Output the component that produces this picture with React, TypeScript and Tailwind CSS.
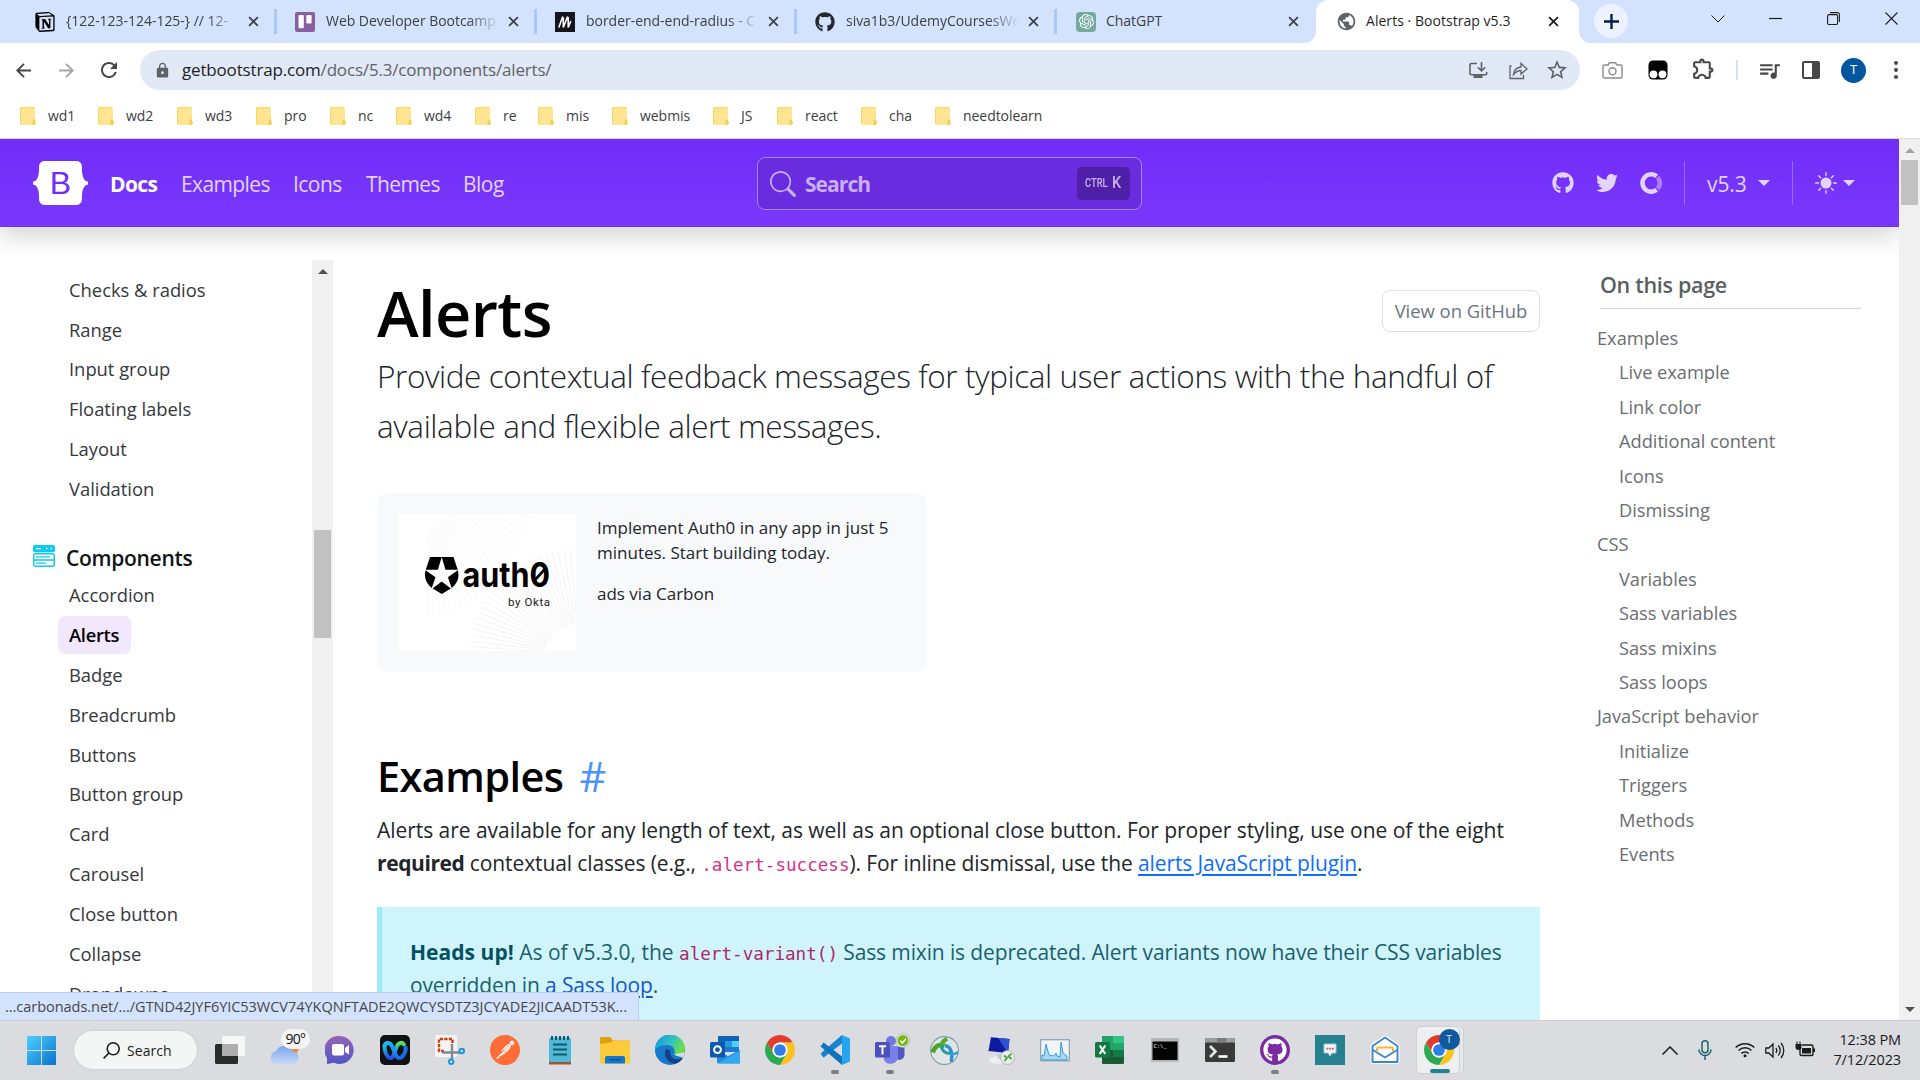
import React from "react";
import { FaGithub, FaTwitter } from "react-icons/fa";
import { SiNotion, SiOpenai, SiPostman } from "react-icons/si";
import { BsSearch, BsSunFill } from "react-icons/bs";
import { MdLock, MdOutlineStarBorder, MdOutlineExtension, MdOutlineQueueMusic, MdPublic, MdRefresh } from "react-icons/md";

const svg = "shrink-0 overflow-visible";

/* ---------- small shared glyphs ---------- */

function Cross({ className }: { className: string }) {
  return (
    <svg className={className} viewBox="0 0 12 12" fill="none" stroke="currentColor" strokeWidth="1.9">
      <path d="M1.2 1.2 10.8 10.8M10.8 1.2 1.2 10.8" />
    </svg>
  );
}

function TrelloIcon() {
  return (
    <svg className="size-5 shrink-0" viewBox="0 0 20 20">
      <rect width="20" height="20" rx="2" fill="#8660a0" />
      <rect x="3.5" y="3" width="5.3" height="13.2" rx="1" fill="#fff" />
      <rect x="11.3" y="3" width="5.3" height="8.6" rx="1" fill="#fff" />
    </svg>
  );
}

function MdnIcon() {
  return (
    <svg className="size-5 shrink-0" viewBox="0 0 20 20">
      <rect width="20" height="20" fill="#15141a" />
      <path d="M3.800 15.500 7.800 4.500M8.300 15.500V5.500M8.300 15.500 12.600 4.500M13.200 15.500V5M13.200 15.500 15.800 9" stroke="#fff" strokeWidth="1.600" />
    </svg>
  );
}

function ChromeIcon({ className }: { className: string }) {
  return (
    <svg className={className} viewBox="2 2 44 44">
      <path d="M4.95 13A22 22 0 0 1 43.05 13H24A11 11 0 0 0 14.47 29.5Z" fill="#e33b2e" />
      <path d="M43.05 13A22 22 0 0 1 24 46L33.53 29.5A11 11 0 0 0 24 13Z" fill="#fcc31e" />
      <path d="M24 46A22 22 0 0 1 4.95 13L14.47 29.5A11 11 0 0 0 33.53 29.5Z" fill="#2da94f" />
      <circle cx="24" cy="24" r="11" fill="#fff" />
      <circle cx="24" cy="24" r="8.6" fill="#2f7de9" />
    </svg>
  );
}

/* ---------- browser chrome ---------- */

const tabs = [
  { title: "{122-123-124-125-} // 12-", icon: <SiNotion className="size-5 shrink-0 text-black" />, fade: true },
  { title: "Web Developer Bootcamp", icon: <TrelloIcon />, fade: true },
  { title: "border-end-end-radius - C", icon: <MdnIcon />, fade: true },
  { title: "siva1b3/UdemyCoursesWe", icon: <FaGithub className="size-5 shrink-0 text-[#24292f]" />, fade: true },
  {
    title: "ChatGPT",
    icon: (
      <span className="flex size-5 shrink-0 items-center justify-center rounded-[4px] bg-[#74aa9c]">
        <SiOpenai className="size-[15px] text-white" />
      </span>
    ),
    fade: false,
  },
];

function TabStrip() {
  return (
    <div className="flex h-[43px] shrink-0 bg-[#d3e3fd] pl-[17px] text-[14px] tracking-[-0.030px] text-[#3c4043]">
      {tabs.map((t, i) => (
        <div
          key={t.title}
          className={i < 4 ? "flex w-[260px] shrink-0 items-center pl-[18px]" : "flex w-[259px] shrink-0 items-center pl-[19px]"}
        >
          {t.icon}
          <span
            className={
              t.fade
                ? "mt-[-2px] ml-[11px] w-[173px] overflow-hidden whitespace-nowrap [mask-image:linear-gradient(to_right,black_82%,transparent)]"
                : "mt-[-2px] ml-[10px] w-[173px] overflow-hidden whitespace-nowrap"
            }
          >
            {t.title}
          </span>
          <Cross className="ml-[9px] size-[11px] shrink-0" />
          {i < 4 && <span className="ml-auto h-[25px] w-[3px] bg-[#a8c7fa]" />}
        </div>
      ))}
      <div className="relative flex w-[263px] shrink-0 items-center rounded-t-[12px] bg-white pl-[20px] text-[#1f1f1f]">
        <svg className="absolute bottom-0 -left-3 size-3" viewBox="0 0 12 12">
          <path d="M12 0v12H0A12 12 0 0 0 12 0Z" fill="#fff" />
        </svg>
        <svg className="absolute -right-3 bottom-0 size-3" viewBox="0 0 12 12">
          <path d="M0 0v12h12A12 12 0 0 1 0 0Z" fill="#fff" />
        </svg>
        <MdPublic className="size-[21px] shrink-0 text-[#5f6368]" />
        <span className="mt-[-2px] ml-[9px] w-[182px] tracking-[0.04px] whitespace-nowrap">Alerts · Bootstrap v5.3</span>
        <Cross className="size-[11px]" />
      </div>
      <div className="mt-1 ml-[15px] flex size-[34px] items-center justify-center rounded-full bg-[#ecf2fe] text-[#041e49]">
        <svg className="size-[15px]" viewBox="0 0 15 15" stroke="currentColor" strokeWidth="2.4">
          <path d="M7.5 0v15M0 7.5h15" />
        </svg>
      </div>
      <div className="ml-auto flex h-[37px] items-center pr-[22px] text-[#1f1f1f]">
        <svg className="mr-[44px] h-[8px] w-[14px]" viewBox="0 0 14 8" fill="none" stroke="currentColor">
          <path d="M.5.5 7 7 13.5.5" />
        </svg>
        <svg className="mr-[45px] size-[13px]" viewBox="0 0 13 13" stroke="currentColor" strokeWidth="1.2">
          <path d="M0 6.5h13" />
        </svg>
        <svg className="mr-[45px] size-[13px]" viewBox="0 0 13 13" fill="none" stroke="currentColor" strokeWidth="1.1">
          <rect x=".6" y="2.6" width="10" height="10" rx="1.5" />
          <path d="M3 .6h7.4a2 2 0 0 1 2 2V10" />
        </svg>
        <svg className="size-[13px]" viewBox="0 0 13 13" fill="none" stroke="currentColor" strokeWidth="1.1">
          <path d="M.5.5 12.5 12.5M12.5.5.5 12.5" />
        </svg>
      </div>
    </div>
  );
}

function Arrow({ className }: { className: string }) {
  return (
    <svg className={className} viewBox="0 0 15 15" fill="none" stroke="currentColor" strokeWidth="1.9">
      <path d="M15 7.5H1.5M8 .8 1.3 7.5 8 14.2" />
    </svg>
  );
}

function Toolbar() {
  return (
    <div className="flex h-[54px] shrink-0 items-center bg-white pl-4 text-[#474747]">
      <Arrow className="size-[15px]" />
      <Arrow className="ml-[28px] size-[15px] rotate-180 text-[#a5a5a5]" />
      <MdRefresh className="ml-[23px] size-[24px]" />
      <div className="ml-[19px] flex h-10 w-[1440px] items-center rounded-full bg-[#e1e8f6] pl-[14px]">
        <MdLock className="size-[17px] text-[#5f6368]" />
        <span className="mt-[-1px] ml-[11px] text-[17px] tracking-[-0.170px] whitespace-nowrap text-[#5f6368]">
          <span className="text-[#1f1f1f]">getbootstrap.com</span>/docs/5.3/components/alerts/
        </span>
        <div className="ml-auto flex items-center pr-[11px] text-[#5f6368]">
          <svg className="size-[19px]" viewBox="0 0 19 19" fill="none" stroke="currentColor" strokeWidth="1.6">
            <path d="M8 2.5H2.2A1.2 1.2 0 0 0 1 3.700V12.600A1.200 1.200 0 0 0 2.200 13.800H16.500A1.200 1.200 0 0 0 17.700 12.600V11M12.500 1V9.500M8.800 6.200 12.500 9.800 16.200 6.200" />
            <path d="M4.500 14h9v3h-9Z" fill="currentColor" stroke="none" />
          </svg>
          <svg className="ml-[21px] size-[19px]" viewBox="0 0 19 19" fill="none" stroke="currentColor" strokeWidth="1.3">
            <path d="M2.500 5H1V17.500H14.500V14M4.500 13.500C5 9 8 6.500 12 6V2.200L18 8 12 13V9.500C8.500 9.700 6.500 11 4.500 13.500Z" />
          </svg>
          <MdOutlineStarBorder className="ml-[17px] size-[24px]" />
        </div>
      </div>
      <svg className="ml-[22px] size-[21px] text-[#8c8c8c]" viewBox="0 0 21 21" fill="none" stroke="currentColor" strokeWidth="1.4">
        <path d="M2.500 5H6L7.500 2.800H13.500L15 5H18.500A1.500 1.500 0 0 1 20 6.500V16.500A1.500 1.500 0 0 1 18.500 18H2.500A1.500 1.500 0 0 1 1 16.500V6.500A1.500 1.500 0 0 1 2.500 5Z" />
        <circle cx="10.500" cy="11.300" r="3.500" />
      </svg>
      <svg className="ml-[25px] size-[20px]" viewBox="0 0 20 20">
        <rect x="0.500" y="0.500" width="19" height="19" rx="4.500" fill="#000" />
        <circle cx="5.500" cy="14.300" r="3.900" fill="#fff" />
        <circle cx="14.500" cy="14.300" r="3.900" fill="#fff" />
      </svg>
      <MdOutlineExtension className="mt-[-3px] ml-[23px] size-[25px]" />
      <span className="ml-[20px] h-5 w-[2px] bg-[#d3e3fd]" />
      <MdOutlineQueueMusic className="ml-[19px] size-[25px]" />
      <svg className="ml-[20px] size-[18px]" viewBox="0 0 18 18">
        <rect x="1" y="1" width="16" height="16" rx="1" fill="none" stroke="currentColor" strokeWidth="2" />
        <path d="M10 1h7v16h-7Z" fill="currentColor" />
      </svg>
      <span className="ml-[21px] flex size-[25px] items-center justify-center rounded-full bg-[#0057a0] text-[13px] text-white">T</span>
      <svg className="ml-[28px] h-[18px] w-[4px]" viewBox="0 0 4 18" fill="currentColor">
        <circle cx="2" cy="2" r="2" />
        <circle cx="2" cy="9" r="2" />
        <circle cx="2" cy="16" r="2" />
      </svg>
    </div>
  );
}

const bookmarks = [
  { label: "wd1", w: "w-[78px]" },
  { label: "wd2", w: "w-[79px]" },
  { label: "wd3", w: "w-[79px]" },
  { label: "pro", w: "w-[74px]" },
  { label: "nc", w: "w-[66px]" },
  { label: "wd4", w: "w-[79px]" },
  { label: "re", w: "w-[63px]" },
  { label: "mis", w: "w-[74px]" },
  { label: "webmis", w: "w-[101px]" },
  { label: "JS", w: "w-[64px]" },
  { label: "react", w: "w-[84px]" },
  { label: "cha", w: "w-[74px]" },
  { label: "needtolearn", w: "w-[120px]" },
];

function Bookmarks() {
  return (
    <div className="flex h-[42px] shrink-0 items-start border-b border-[#dcdcdc] bg-white pt-[9px] pl-5 text-[14px] tracking-[-0.05px] text-[#3c4043]">
      {bookmarks.map((b) => (
        <div key={b.label} className={`flex h-[20px] items-center whitespace-nowrap ${b.w}`}>
          <svg className="h-[18px] w-4 shrink-0" viewBox="0 0 16 18">
            <path d="M1.500 0h12A1.500 1.500 0 0 1 15 1.500V18H1.500A1.500 1.500 0 0 1 0 16.500V1.500A1.500 1.500 0 0 1 1.500 0Z" fill="#ffe591" />
            <path d="M.5 17V1M1 .8H14" stroke="#fbd65c" strokeWidth="1" />
            <path d="M12.800 12.500h2.200l1 4-1.500 1.500h-2Z" fill="#f5cd4f" />
          </svg>
          <span className="mt-[-2px] ml-3">{b.label}</span>
        </div>
      ))}
    </div>
  );
}

/* ---------- site header ---------- */

function Caret() {
  return <span className="border-x-[6px] border-t-[6.5px] border-x-transparent border-t-current" />;
}

function SiteHeader() {
  return (
    <header className="relative z-10 flex h-[88px] shrink-0 items-center bg-linear-to-b from-[#712cf9] to-[#7a38fb] pl-[33px] text-[21px] tracking-[-0.45px] text-[#e2d4fe] shadow-[0_11px_22px_rgba(0,0,0,0.15),inset_0_-1px_0_rgba(0,0,0,0.1)]">
      <div className="relative h-[44px] w-[55px]">
        <svg className="size-full" viewBox="0 0 118 94" fill="#fff">
          <path d="M24.509 0c-6.733 0-11.715 5.893-11.492 12.284.214 6.140-.064 14.092-2.066 20.577C8.943 39.365 5.547 43.485 0 44.014v5.972c5.547.529 8.943 4.649 10.951 11.153 2.002 6.485 2.280 14.437 2.066 20.577C12.794 88.106 17.776 94 24.510 94H93.500c6.733 0 11.714-5.893 11.491-12.284-.214-6.140.064-14.092 2.066-20.577 2.009-6.504 5.396-10.624 10.943-11.153v-5.972c-5.547-.529-8.934-4.649-10.943-11.153-2.002-6.484-2.280-14.437-2.066-20.577C105.214 5.894 100.233 0 93.500 0H24.508z" />
        </svg>
        <span className="absolute inset-0 flex items-center justify-center font-['Liberation_Sans'] text-[32px] tracking-normal text-[#712cf9]">B</span>
      </div>
      <nav className="flex pt-[3px] font-medium whitespace-nowrap">
        <span className="ml-[22px] w-[71px] font-bold tracking-[-0.600px] text-white">Docs</span>
        <span className="w-[112px] tracking-[-0.600px]">Examples</span>
        <span className="w-[73px] tracking-[-0.550px]">Icons</span>
        <span className="w-[97px] tracking-[-0.600px]">Themes</span>
        <span className="w-[60px] tracking-[-0.500px]">Blog</span>
      </nav>
      <div className="mt-px ml-[234px] flex h-[53px] w-[385px] items-center rounded-[8px] border border-[#a883f4] bg-[#692cdf] px-[11px] text-[#c9aefb]">
        <BsSearch className="ml-px size-[26px]" />
        <span className="mt-[2px] ml-[9px] font-bold tracking-[-0.950px]">Search</span>
        <span className="ml-auto flex h-[33px] w-[53px] items-center justify-center gap-[6px] rounded-[5px] bg-[#4f20a7] pb-[2px] font-['Roboto'] text-[#c7b5ea]">
          <span className="w-[21px] origin-left scale-x-75 pt-px text-[12.500px] font-medium tracking-normal">CTRL</span>
          <span className="origin-left scale-x-90 text-[16px] font-medium tracking-normal">K</span>
        </span>
      </div>
      <div className="ml-auto flex items-center pr-[44px]">
        <FaGithub className="size-[22px]" />
        <FaTwitter className="ml-[22px] size-[22px]" />
        <svg className="ml-[22px] size-[22px]" viewBox="0 0 22 22" fill="none" strokeWidth="4.600">
          <path d="M16.700 4.300A8.700 8.700 0 1 0 16.700 17.700" stroke="#e2d4fe" />
          <path d="M17.600 5.200A8.700 8.700 0 0 1 17.600 16.800" stroke="#ac82fc" />
        </svg>
        <span className="ml-[22px] h-[44px] w-px bg-[#9c6afb]" />
        <span className="ml-[22px] w-[51px] pt-[3px] tracking-[-0.1px]">v5.3</span>
        <Caret />
        <span className="ml-[22px] h-[44px] w-px bg-[#9c6afb]" />
        <BsSunFill className="mr-[6px] ml-[22px] size-[22px]" />
        <Caret />
      </div>
    </header>
  );
}

/* ---------- page columns ---------- */

const formLinks = ["Checks & radios", "Range", "Input group", "Floating labels", "Layout", "Validation"];
const componentLinks = [
  "Accordion",
  "Alerts",
  "Badge",
  "Breadcrumb",
  "Buttons",
  "Button group",
  "Card",
  "Carousel",
  "Close button",
  "Collapse",
  "Dropdowns",
];

function SideLink({ label, active }: { label: string; active?: boolean }) {
  return (
    <li className="flex h-[39.900px] items-center pl-[58px]">
      <span
        className={
          active
            ? "flex h-[38px] w-[73px] items-center rounded-[7px] bg-[#f1e8fe] pl-[11px] font-semibold tracking-[-0.300px] text-black"
            : "px-[11px] pb-px"
        }
      >
        {label}
      </span>
    </li>
  );
}

function Sidebar() {
  return (
    <aside className="flex w-[333px] shrink-0 pt-[33px]">
      <div className="w-[312px] overflow-hidden pt-[10px] text-[18.400px] tracking-[-0.020px] whitespace-nowrap text-[#34383c]">
        <ul>
          {formLinks.map((l) => (
            <SideLink key={l} label={l} />
          ))}
        </ul>
        <div className="mt-[33px] flex h-[32px] items-center pl-[33px] text-[21px] font-semibold tracking-[-0.300px] text-[#111316]">
          <svg className="mt-[-4px] mr-[11px] size-[22px]" viewBox="0 0 22 22">
            <rect width="22" height="7.200" rx="2" fill="#0dcaf0" />
            <path d="M3 3.600h5M13 3.600h1.500M17.500 3.600h1.500" stroke="#fff" strokeWidth="1.400" />
            <rect x=".7" y="8.700" width="20.600" height="12.600" rx="1.800" fill="#fff" stroke="#0dcaf0" strokeWidth="1.400" />
            <path d="M1 15h20M3 11.900h14M3 18.100h10" stroke="#0dcaf0" strokeWidth="1.400" />
          </svg>
          Components
        </div>
        <ul className="mt-[1px]">
          {componentLinks.map((l) => (
            <SideLink key={l} label={l} active={l === "Alerts"} />
          ))}
        </ul>
      </div>
      <div className="flex w-[21px] flex-col items-center bg-[#f0f0f0]">
        <span className="mt-[9px] border-x-[5px] border-b-[5px] border-x-transparent border-b-[#505050]" />
        <span className="mt-[256px] h-[108px] w-[17px] bg-[#c1c1c1]" />
      </div>
    </aside>
  );
}

function AdImage() {
  const rays = Array.from({ length: 34 }, (_, i) => i);
  return (
    <svg className="h-[137px] w-[178px] shrink-0 bg-white" viewBox="0 0 178 137">
      <g stroke="#f0f0f0" strokeWidth=".8">
        {rays.map((i) => {
          const a = Math.PI * (0.95 + i * 0.018);
          const c = Math.cos(a);
          const s = Math.sin(a);
          return <path key={i} d={`M${182 + c * 35} ${140 + s * 30}L${182 + c * 110} ${140 + s * 105}`} />;
        })}
        {rays.map((i) => {
          const a = Math.PI * (0.5 - i * 0.016);
          const c = Math.cos(a);
          const s = Math.sin(a);
          return <path key={i} d={`M${30 + c * 35} ${-60 + s * 75}L${30 + c * 112} ${-60 + s * 160}`} opacity=".6" />;
        })}
      </g>
      <path d="M32 43H55.500L59.800 56C62 64 59 70.500 52 75L43.800 80 35.500 75C28.500 70.500 25.500 64 27.700 56Z" fill="#000" />
      <path d="M43.700 43 47.500 55.700H60.500L49.900 63.300 54.200 75.500 43.700 67.500 33.200 75.500 37.500 63.300 26.900 55.700H39.900Z" fill="#fff" />
      <text x="64.500" y="73" fontFamily="Inter" fontSize="34" fontWeight="700" textLength="67" lengthAdjust="spacingAndGlyphs">
        auth
      </text>
      <text x="131.500" y="73" fontFamily="Inter" fontSize="34" fontWeight="700" textLength="20.500" lengthAdjust="spacingAndGlyphs">
        0
      </text>
      <path d="M136.500 66.500 147 55" stroke="#000" strokeWidth="2.600" />
      <text x="110" y="91.500" fontFamily="Roboto" fontSize="11.500" textLength="42" fill="#222">
        by Okta
      </text>
    </svg>
  );
}

function Content() {
  return (
    <main className="ml-[44px] w-[1163px] shrink-0 whitespace-nowrap text-[#212529]">
      <div className="flex items-start justify-between">
        <h1 className="mt-[46px] text-[63px] leading-[80px] font-semibold tracking-[-0.600px] text-black">Alerts</h1>
        <span className="mt-[63px] flex h-[42px] w-[158px] items-center justify-center rounded-[8px] border border-[#dee2e6] text-[18.400px] text-[#6c757d]">
          View on GitHub
        </span>
      </div>
      <p className="mt-[-2px] text-[31.500px] leading-[50px] font-light tracking-[-0.400px] text-[#212529]">
        Provide contextual feedback messages for typical user actions with the handful of
        <br />
        available and flexible alert messages.
      </p>
      <div className="mt-[42px] flex h-[179px] w-[550px] rounded-[11px] bg-[#f8f9fb] pt-[21px] pl-[21px]">
        <AdImage />
        <div className="ml-[21px] pt-[1px] text-[17px] leading-[25px]">
          Implement Auth0 in any app in just 5
          <br />
          minutes. Start building today.
          <p className="mt-4">ads via Carbon</p>
        </div>
      </div>
      <h2 className="mt-[78px] text-[41.500px] leading-[53px] font-semibold tracking-[-0.600px] text-black">
        Examples<span className="ml-[16px] font-normal text-[#4a93ff]">#</span>
      </h2>
      <p className="mt-[11px] text-[21px] leading-[33px] tracking-[-0.040px]">
        Alerts are available for any length of text, as well as an optional close button. For proper styling, use one of the eight
        <br />
        <span className="tracking-[-0.110px]">
          <b className="tracking-[-0.400px]">required</b> contextual classes (e.g.,{" "}
          <code className="font-['DejaVu_Sans_Mono'] text-[17.600px] leading-none tracking-normal text-[#d63384]">.alert-success</code>
          ). For inline dismissal, use the{" "}
          <span className="text-[#0d6efd] underline underline-offset-[3px]">alerts JavaScript plugin</span>.
        </span>
      </p>
      <div className="mt-[27px] border-l-[5px] border-[#9eeaf9] bg-[#cff4fc] pt-[29px] pb-20 pl-[28px] text-[21px] leading-[33px] tracking-[-0.130px] text-[#1c5f6c]">
        <b className="tracking-[0.040px] text-[#055160]">Heads up!</b> <span className="tracking-normal">As of v5.3.0, the </span>
        <code className="font-['DejaVu_Sans_Mono'] text-[17.600px] leading-none tracking-normal text-[#ab296a]">alert-variant()</code>{" "}
        Sass mixin is deprecated. Alert variants now have their CSS variables
        <br />
        overridden in <span className="text-[#1a56c4] underline underline-offset-[3px]">a Sass loop</span>.
      </div>
    </main>
  );
}

const toc = [
  { label: "Examples", top: true },
  { label: "Live example" },
  { label: "Link color" },
  { label: "Additional content" },
  { label: "Icons" },
  { label: "Dismissing" },
  { label: "CSS", top: true },
  { label: "Variables" },
  { label: "Sass variables" },
  { label: "Sass mixins" },
  { label: "Sass loops" },
  { label: "JavaScript behavior", top: true },
  { label: "Initialize" },
  { label: "Triggers" },
  { label: "Methods" },
  { label: "Events" },
];

function Toc() {
  return (
    <div className="ml-[57px] w-[264px] shrink-0 whitespace-nowrap text-[#5a5f64]">
      <div className="ml-[3px] h-[82px] border-b border-[#d3d4d5] pt-[41px] text-[21.500px] leading-[33px] font-semibold tracking-[-0.300px]">
        On this page
      </div>
      <ul className="pt-[12px] text-[18.300px] leading-[34.400px] tracking-[-0.040px] text-[#6a6e72]">
        {toc.map((t) => (
          <li key={t.label} className={t.top ? "" : "pl-[22px]"}>
            {t.label}
          </li>
        ))}
      </ul>
    </div>
  );
}

/* ---------- taskbar ---------- */

const appIcons: { name: string; dot?: boolean; art: React.ReactNode }[] = [
  {
    name: "taskview",
    art: (
      <svg className={`size-[30px] ${svg}`} viewBox="0 0 30 30">
        <rect x="0" y="9" width="23" height="20" rx="1.500" fill="#2b2b2b" />
        <rect x="7" y="1" width="23" height="20" rx="1.500" fill="#f7f7f7" />
        <path d="M7 9h16v12H7Z" fill="#aeaeae" />
      </svg>
    ),
  },
  {
    name: "weather",
    art: (
      <svg className={`size-[30px] ${svg}`} viewBox="0 0 30 30">
        <defs>
          <linearGradient id="cloud" x1="0" y1="0" x2="0" y2="1">
            <stop offset="0" stopColor="#7ba4ec" />
            <stop offset="1" stopColor="#c5dafa" />
          </linearGradient>
        </defs>
        <circle cx="23" cy="13" r="6" fill="#f08a3c" />
        <path d="M7 29a6.500 6.500 0 0 1-.8-12.900A9 9 0 0 1 22.500 16.500a6.300 6.300 0 0 1 1 12.500Z" fill="url(#cloud)" />
        <rect x="11" y="-6" width="29" height="20" rx="10" fill="#f5f5f6" />
        <text x="15.500" y="9.300" fontFamily="Open Sans" fontSize="14" textLength="20.500" fill="#111">
          90°
        </text>
      </svg>
    ),
  },
  {
    name: "chat",
    art: (
      <svg className="size-[30px]" viewBox="0 0 30 30">
        <defs>
          <linearGradient id="chat" x1="0" y1="0" x2="0" y2="1">
            <stop offset="0" stopColor="#9862b5" />
            <stop offset="1" stopColor="#5058c8" />
          </linearGradient>
        </defs>
        <path d="M15 1a14 14 0 1 1-6 26.800L2 29V23A14 14 0 0 1 15 1Z" fill="url(#chat)" />
        <rect x="7" y="9" width="12" height="11.500" rx="2" fill="#fff" />
        <path d="M20 13 24 10v9.500L20 17Z" fill="#fff" />
      </svg>
    ),
  },
  {
    name: "webex",
    art: (
      <svg className="size-[30px]" viewBox="0 0 30 30">
        <defs>
          <linearGradient id="webexLeft" x1="0" y1="0" x2="1" y2="1">
            <stop offset="0" stopColor="#18c0f2" />
            <stop offset="1" stopColor="#1a5be8" />
          </linearGradient>
          <linearGradient id="webexRight" x1="0" y1="0" x2="0" y2="1">
            <stop offset="0" stopColor="#5be05a" />
            <stop offset=".4" stopColor="#22a8d8" />
            <stop offset="1" stopColor="#1f4cf0" />
          </linearGradient>
        </defs>
        <rect width="30" height="30" rx="5" fill="#111" />
        <path d="M4.500 11C4.500 17 7 23 10.500 23S15 16 16.500 12C18 8 21.500 6.500 24 9.500" fill="none" stroke="url(#webexRight)" strokeWidth="4" strokeLinecap="round" />
        <path d="M4.500 11C5.500 6.500 10.500 7 12.500 12S16 23 19.500 23 25.800 17 25.800 13" fill="none" stroke="url(#webexLeft)" strokeWidth="4" strokeLinecap="round" />
      </svg>
    ),
  },
  {
    name: "snip",
    art: (
      <svg className="size-[30px]" viewBox="0 0 30 30">
        <rect width="22" height="22" rx="2" fill="#f5f5f6" />
        <path d="M17.500 8V4H4V16H9" fill="none" stroke="#d13a12" strokeWidth="2.400" strokeDasharray="3.200 1.300" />
        <path d="M17 9V24M7 17.500H25" stroke="#84898f" strokeWidth="2.400" />
        <circle cx="16.200" cy="26.800" r="2.200" fill="none" stroke="#1b98e0" strokeWidth="2" />
        <circle cx="26.800" cy="16" r="2.200" fill="none" stroke="#1b98e0" strokeWidth="2" />
      </svg>
    ),
  },
  {
    name: "postman",
    art: (
      <span className="flex size-[30px] items-center justify-center rounded-full bg-[radial-gradient(circle,white_60%,transparent_62%)]">
        <SiPostman className="size-[30px] text-[#ff6c37]" />
      </span>
    ),
  },
  {
    name: "notepad",
    art: (
      <svg className="size-[30px]" viewBox="0 0 30 30">
        <path d="M4 26h22v3.500H4Z" fill="#9b5a2c" />
        <rect x="4" y="2.500" width="22" height="24.500" rx="1.500" fill="#50b9d8" />
        <path d="M7 1v4M11 1v4M15 1v4M19 1v4M23 1v4" stroke="#14586b" strokeWidth="2" />
        <path d="M8 9.500h14M8 14.500h14M8 19.500h14" stroke="#14586b" strokeWidth="1.800" />
      </svg>
    ),
  },
  {
    name: "explorer",
    art: (
      <svg className="size-[30px]" viewBox="0 0 30 30">
        <path d="M0 3.500A1.500 1.500 0 0 1 1.500 2H10l3 3.500H28A2 2 0 0 1 30 7.500V12H0Z" fill="#dda10c" />
        <path d="M0 9l11-1.500 2-2H29a1 1 0 0 1 1 1V27a1.500 1.500 0 0 1-1.500 1.500h-27A1.500 1.500 0 0 1 0 27Z" fill="#fccb3b" />
        <path d="M5 28.500V23a2 2 0 0 1 2-2H23a2 2 0 0 1 2 2v5.500Z" fill="#1377ca" />
        <path d="M9 24.700h12" stroke="#0a4d8c" strokeWidth="1.200" />
      </svg>
    ),
  },
  {
    name: "edge",
    art: (
      <svg className="size-[30px]" viewBox="0 0 30 30">
        <defs>
          <linearGradient id="edge" x1="0" y1="0" x2="1" y2=".4">
            <stop offset=".2" stopColor="#1ba2dc" />
            <stop offset=".6" stopColor="#34c2c0" />
            <stop offset="1" stopColor="#6ae04a" />
          </linearGradient>
        </defs>
        <circle cx="15" cy="15" r="15" fill="#1679cc" />
        <path d="M0 15A15 15 0 0 1 30 14C30 20 24 21.500 19 19.500 21 16 19 10 12 10 5 10 1 13 0 15Z" fill="url(#edge)" />
        <path d="M10 16C9 22 14 29.500 21 28.600 24 27.500 26.500 25.500 28 23 22 26 15 24 15.500 17.500 15.500 14.500 11 12.500 10 16Z" fill="#123f86" />
        <path d="M19 19.500C22 21.500 26 21.500 28 23L30 17 26 18Z" fill="#d9dbdf" />
      </svg>
    ),
  },
  {
    name: "outlook",
    art: (
      <svg className="size-[30px]" viewBox="0 0 30 30">
        <rect x="8" y="1" width="21" height="14" rx="1" fill="#0f62b4" />
        <path d="M15 6h7v6h-7Z" fill="#2a96e4" />
        <path d="M22 6h7v6h-7Z" fill="#4fd0fb" />
        <path d="M15 12h14v5H15Z" fill="#1a7bd0" />
        <path d="M7 16 18 21 30 15V27a1.500 1.500 0 0 1-1.500 1.500H8.500A1.500 1.500 0 0 1 7 27Z" fill="#1f8de0" />
        <path d="M8 28 30 16V27.500a1 1 0 0 1-1 1Z" fill="#31a9ee" />
        <rect x="0" y="7" width="15" height="15.500" rx="1.500" fill="#0c59ae" />
        <circle cx="7.500" cy="14.700" r="3.400" fill="none" stroke="#fff" strokeWidth="2" />
      </svg>
    ),
  },
  { name: "chrome", art: <ChromeIcon className="size-[30px]" /> },
  {
    name: "vscode",
    dot: true,
    art: (
      <svg className="size-[30px]" viewBox="0 0 30 30">
        <path d="M22 8.500V0L.6 18.500 3.500 22.500Z" fill="#1583cf" />
        <path d="M22 21.500V30L.6 11.500 3.500 7.500Z" fill="#0f74bd" />
        <path d="M22 0 30 3.500V26.500L22 30Z" fill="#27a4ee" />
      </svg>
    ),
  },
  {
    name: "teams",
    dot: true,
    art: (
      <svg className={`size-[30px] ${svg}`} viewBox="0 0 30 30">
        <circle cx="16" cy="6" r="5" fill="#7078dc" />
        <path d="M21 12h8.500V20a5 5 0 0 1-7 4.500Z" fill="#5058c0" />
        <path d="M9 11h14V21a7.500 7.500 0 0 1-14 4Z" fill="#7a80ea" />
        <rect x="0" y="7" width="15" height="15.500" rx="1.500" fill="#4b52bd" />
        <path d="M4 11.300h7M7.500 11v8.500" stroke="#fff" strokeWidth="2" />
        <circle cx="28" cy="5.500" r="6.900" fill="#eef3e6" stroke="#9aa092" strokeWidth=".6" />
        <circle cx="28" cy="5.500" r="5.500" fill="#76b71a" />
        <path d="M25.200 5.700 27.400 7.800 31 3.800" fill="none" stroke="#fff" strokeWidth="1.500" />
      </svg>
    ),
  },
  {
    name: "anyconnect",
    art: (
      <svg className="size-[29px]" viewBox="0 0 28 28">
        <circle cx="14" cy="14" r="13.400" fill="#e0e6e8" stroke="#7f9ba6" strokeWidth="1" />
        <path d="M2.500 16C5 9 9 7.500 14 9.500" fill="none" stroke="#4ea32a" strokeWidth="4.500" />
        <path d="M16.500 2.500C13 4.500 11 7 11 9.500" fill="none" stroke="#56ab2f" strokeWidth="4" />
        <path d="M11 9C11 15 16 17.500 21 16.500" fill="none" stroke="#2b9a9c" strokeWidth="2.800" />
        <path d="M14.500 9.500C20 10 22 16 20.500 25" fill="none" stroke="#2b93d2" strokeWidth="3.400" />
        <path d="M20 17.500C23 18 25 17 27 15.500" fill="none" stroke="#3aa0dc" strokeWidth="2.600" />
      </svg>
    ),
  },
  {
    name: "remote",
    art: (
      <svg className="size-[30px]" viewBox="0 0 30 30">
        <ellipse cx="12" cy="25" rx="8" ry="3.800" fill="#eceef0" />
        <path d="M12 19h7l1 5h-7Z" fill="#c9cdd2" />
        <path d="M4.500 1 27 3 24.500 20 2 17.500Z" fill="#d5d9e0" />
        <path d="M6 2.200 24.500 4 23 18 3.500 16Z" fill="#0d1a9e" />
        <path d="M13 3 24.500 4 23 18Z" fill="#2f52d4" />
        <circle cx="22.500" cy="22.500" r="7" fill="#e9ece9" stroke="#a6aca8" strokeWidth=".8" />
        <path d="M19 20.500l3 2.500-2.500 3M26.500 18.500l-3 3 3 2.500" fill="none" stroke="#3ba33a" strokeWidth="1.700" />
      </svg>
    ),
  },
  {
    name: "monitor",
    art: (
      <svg className="size-[30px]" viewBox="0 0 30 30">
        <rect x=".7" y="4.700" width="28.600" height="21" fill="#f1f5f8" stroke="#8aa0ae" strokeWidth="1.200" />
        <path d="M2 25V20L4 21 6 9 9 20 14 21 16 18 17 21 20 22 21 7 23 18 27 21V25Z" fill="#a5d6f6" stroke="#3d9fd8" strokeWidth="1" />
      </svg>
    ),
  },
  {
    name: "excel",
    art: (
      <svg className="size-[30px]" viewBox="0 0 30 30">
        <path d="M7 1h12v14H7Z" fill="#23a366" />
        <path d="M18 1h10a1 1 0 0 1 1 1v6H18Z" fill="#33c481" />
        <path d="M18 8h11v7H18Z" fill="#22a566" />
        <path d="M7 15h22v13a1 1 0 0 1-1 1H8a1 1 0 0 1-1-1Z" fill="#185c37" />
        <path d="M18 15h11v7H18Z" fill="#117c43" />
        <rect x="0" y="7" width="15" height="15.500" rx="1.500" fill="#117a42" />
        <path d="M4.700 10.500 10.300 19M10.300 10.500 4.700 19" stroke="#fff" strokeWidth="2.100" />
      </svg>
    ),
  },
  {
    name: "cmd",
    art: (
      <svg className="h-[24px] w-[28px]" viewBox="0 0 28 24">
        <rect width="28" height="24" fill="#b4b8bc" />
        <path d="M1.500 3.500h25v18.500h-25Z" fill="#050505" />
        <text x="2.500" y="9.500" fontFamily="Liberation Mono" fontSize="5.500" fill="#fff">
          C:\_
        </text>
      </svg>
    ),
  },
  {
    name: "terminal",
    art: (
      <svg className="h-[24px] w-[30px]" viewBox="0 0 30 24">
        <rect width="30" height="24" rx="1.500" fill="#3a3a3a" />
        <path d="M0 1.500A1.500 1.500 0 0 1 1.500 0H28.500A1.500 1.500 0 0 1 30 1.500V4.500H0Z" fill="#9d9d9d" />
        <path d="M12 0h9v4.500h-9Z" fill="#7a7a7a" />
        <path d="M5 8 10.500 13.500 5 19" fill="none" stroke="#e8e8e8" strokeWidth="2.600" />
        <path d="M13.500 18.500h9" stroke="#fff" strokeWidth="2.600" />
      </svg>
    ),
  },
  {
    name: "github",
    dot: true,
    art: (
      <span className="flex size-[30px] items-center justify-center rounded-full bg-[#7a2ba2]">
        <FaGithub className="size-[24px] text-white" />
      </span>
    ),
  },
  {
    name: "sms",
    art: (
      <svg className="size-[30px]" viewBox="0 0 30 30">
        <rect width="30" height="30" fill="#25808f" />
        <path d="M9 9h12v9h-4l-2 3-2-3H9Z" fill="#f3f4f8" stroke="#a5c9d6" strokeWidth="1" />
        <path d="M11.500 13.700h1.800M14.200 13.700h1.800M17 13.700h1.800" stroke="#d0525a" strokeWidth="1.800" />
      </svg>
    ),
  },
  {
    name: "mail",
    art: (
      <svg className="size-[30px]" viewBox="0 0 30 30" strokeLinejoin="round">
        <path d="M2.500 11 15 2.500 27.500 11V27H2.500Z" fill="#fff" stroke="#fff" strokeWidth="4" />
        <path d="M2.500 11 15 2.500 27.500 11V27H2.500Z" fill="#fff" stroke="#3a86cf" strokeWidth="1.900" />
        <path d="M3 15 15 22.500 27 15" fill="none" stroke="#3a86cf" strokeWidth="1.800" />
        <path d="M7 16.500V14a1.500 1.500 0 0 1 1.500-1.500H21.500A1.500 1.500 0 0 1 23 14V16.500" fill="none" stroke="#f7b43c" strokeWidth="2" />
      </svg>
    ),
  },
];

function Taskbar() {
  return (
    <div className="relative flex h-[60px] shrink-0 items-center border-t border-[#cdced0] bg-[#dadcdf] pb-px pl-[27px] text-[14px] text-[#1b1b1b]">
      <svg className="size-[29px]" viewBox="0 0 29 29">
        <defs>
          <linearGradient id="win" x1="0" y1="0" x2="1" y2="1">
            <stop offset="0" stopColor="#4fd0fb" />
            <stop offset="1" stopColor="#0672cf" />
          </linearGradient>
        </defs>
        <path d="M0 0h14v14H0ZM15 0h14v14H15ZM0 15h14v14H0ZM15 15h14v14H15Z" fill="url(#win)" />
      </svg>
      <div className="ml-[18px] flex h-[38px] w-[123px] items-center rounded-full bg-[#f4f6f6] pl-[29px] shadow-[0_0_2px_rgba(0,0,0,0.15)]">
        <svg className="size-[17px]" viewBox="0 0 17 17" fill="none" stroke="currentColor" strokeWidth="1.600">
          <circle cx="10.200" cy="6.800" r="6" />
          <path d="M6 11 .6 16.400" />
        </svg>
        <span className="ml-[7px] tracking-[0.050px]">Search</span>
      </div>
      <div className="ml-[5px] flex h-full items-center">
        {appIcons.map((a) => (
          <div key={a.name} className="flex h-full w-[55px] flex-col items-center justify-center">
            <div className="flex h-[30px] items-center">{a.art}</div>
            <span className={a.dot ? "mt-[5px] -mb-[9px] h-1 w-2 rounded-full bg-[#7c7e81]" : "hidden"} />
          </div>
        ))}
        <div className="relative ml-[3.500px] flex h-[48px] w-[44px] items-center justify-center rounded-[5px] border border-[#cfd0d3] bg-[#eeeff0] shadow-[4px_0_0_-1px_#e6e7e9,5px_0_0_-1px_#cfd0d3]">
          <ChromeIcon className="ml-[3px] size-[30px]" />
          <span className="absolute top-[2px] right-[-1px] flex size-[21px] items-center justify-center rounded-full bg-[#0f5a9c] text-[11px] text-[#cfe0ee]">
            T
          </span>
          <span className="absolute bottom-0 left-[13px] h-1 w-[20px] rounded-full bg-[#27808f]" />
        </div>
      </div>
      <div className="ml-auto flex items-center pr-[19px]">
        <svg className="h-[9px] w-[16px]" viewBox="0 0 16 9" fill="none" stroke="currentColor" strokeWidth="1.500">
          <path d="M.5 8.500 8 1 15.500 8.500" />
        </svg>
        <svg className="ml-[20px] h-[20px] w-[14px]" viewBox="0 0 14 20" fill="none" stroke="#1d6470" strokeWidth="1.500">
          <rect x="4" y=".8" width="6" height="12" rx="3" />
          <path d="M1 9.500a6 6 0 0 0 12 0M7 15.500V20" />
        </svg>
        <svg className="ml-[23px] h-[16px] w-[20px]" viewBox="0 0 20 16" fill="none" stroke="currentColor" strokeWidth="1.500">
          <path d="M.7 5.500a13.200 13.200 0 0 1 18.600 0M3.600 8.500a9 9 0 0 1 12.800 0M6.300 11.400a5.300 5.300 0 0 1 7.400 0" />
          <circle cx="10" cy="13.700" r="1.500" fill="currentColor" stroke="none" />
        </svg>
        <svg className="ml-[10px] h-[17px] w-[20px]" viewBox="0 0 20 17" fill="none" stroke="currentColor" strokeWidth="1.300">
          <path d="M.8 6h3L8 2v13L3.800 11h-3ZM10.800 6a4 4 0 0 1 0 5M13.300 3.500a7.500 7.500 0 0 1 0 10M16 1a11.500 11.500 0 0 1 0 15" />
        </svg>
        <svg className="ml-[10px] h-[18px] w-[20px]" viewBox="0 0 20 18" fill="none" stroke="currentColor" strokeWidth="1.400">
          <path d="M7 4h9.500A1.500 1.500 0 0 1 18 5.500V13a1.500 1.500 0 0 1-1.500 1.500H6.500A1.500 1.500 0 0 1 5 13V8" />
          <path d="M7 7h9v5.500H7ZM18 7.500h2V11h-2ZM.5 3h6v3a3 3 0 0 1-6 0ZM1.500.5h1V3h-1ZM4.500.5h1V3h-1Z" fill="currentColor" stroke="none" />
        </svg>
        <div className="mt-[-1px] ml-[16px] w-[70px] text-right text-[14.500px] leading-5 tracking-[-0.120px] whitespace-nowrap">
          12:38 PM
          <br />
          7/12/2023
        </div>
      </div>
    </div>
  );
}

export default function App() {
  return (
    <div className="relative flex h-[1080px] w-[1920px] flex-col overflow-hidden bg-white font-['Open_Sans',sans-serif]">
      <TabStrip />
      <Toolbar />
      <Bookmarks />
      <div className="flex h-[881px] shrink-0">
        <div className="flex w-[1899px] shrink-0 flex-col overflow-hidden">
          <SiteHeader />
          <div className="flex min-h-0 flex-1 overflow-hidden">
            <Sidebar />
            <Content />
            <Toc />
          </div>
        </div>
        <div className="flex w-[21px] shrink-0 flex-col items-center bg-[#f0f0f0]">
          <span className="mt-[9px] border-x-[5px] border-b-[5px] border-x-transparent border-b-[#a3a3a3]" />
          <span className="mt-[7px] h-[45px] w-[17px] bg-[#c1c1c1]" />
          <span className="mt-auto mb-[8px] border-x-[5px] border-t-[5px] border-x-transparent border-t-[#505050]" />
        </div>
      </div>
      <Taskbar />
      <div className="absolute top-[992px] left-0 z-20 flex h-[28px] w-[639px] items-center border-t border-r border-[#bccdea] bg-[#d3e3fd] pl-[5px] text-[14.500px] tracking-[-0.030px] whitespace-nowrap text-[#474747]">
        ...carbonads.net/.../GTND42JYF6YIC53WCV74YKQNFTADE2QWCYSDTZ3JCYADE2JICAADT53K...
      </div>
    </div>
  );
}
